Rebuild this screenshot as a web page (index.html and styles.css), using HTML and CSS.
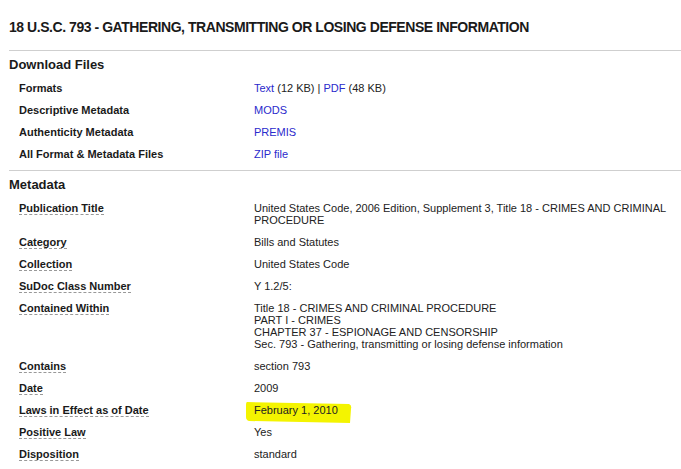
FILE: index.html
```html
<!DOCTYPE html>
<html lang="en">
<head>
    <meta charset="UTF-8">
    <title>18 U.S.C. 793 - Gathering, transmitting or losing defense information</title>
    <link rel="stylesheet" href="styles.css">
</head>
<body>

<div class="page">
    <h1 class="doc-title">18 U.S.C. 793 - GATHERING, TRANSMITTING OR LOSING DEFENSE INFORMATION</h1>

    <div class="section">
        <h2>Download Files</h2>
        <div class="row">
            <div class="label">Formats</div>
            <div class="value"><a href="#">Text</a> (12 KB) | <a href="#">PDF</a> (48 KB)</div>
        </div>
        <div class="row">
            <div class="label">Descriptive Metadata</div>
            <div class="value"><a href="#">MODS</a></div>
        </div>
        <div class="row">
            <div class="label">Authenticity Metadata</div>
            <div class="value"><a href="#">PREMIS</a></div>
        </div>
        <div class="row">
            <div class="label">All Format &amp; Metadata Files</div>
            <div class="value"><a href="#">ZIP file</a></div>
        </div>
    </div>

    <div class="section">
        <h2>Metadata</h2>
        <div class="row">
            <div class="label"><abbr>Publication Title</abbr></div>
            <div class="value">United States Code, 2006 Edition, Supplement 3, Title 18 - CRIMES AND CRIMINAL PROCEDURE</div>
        </div>
        <div class="row">
            <div class="label"><abbr>Category</abbr></div>
            <div class="value">Bills and Statutes</div>
        </div>
        <div class="row">
            <div class="label"><abbr>Collection</abbr></div>
            <div class="value">United States Code</div>
        </div>
        <div class="row">
            <div class="label"><abbr>SuDoc Class Number</abbr></div>
            <div class="value">Y 1.2/5:</div>
        </div>
        <div class="row">
            <div class="label"><abbr>Contained Within</abbr></div>
            <div class="value">
                Title 18 - CRIMES AND CRIMINAL PROCEDURE<br>
                PART I - CRIMES<br>
                CHAPTER 37 - ESPIONAGE AND CENSORSHIP<br>
                Sec. 793 - Gathering, transmitting or losing defense information
            </div>
        </div>
        <div class="row">
            <div class="label"><abbr>Contains</abbr></div>
            <div class="value">section 793</div>
        </div>
        <div class="row">
            <div class="label"><abbr>Date</abbr></div>
            <div class="value">2009</div>
        </div>
        <div class="row">
            <div class="label"><abbr>Laws in Effect as of Date</abbr></div>
            <div class="value">
                <span class="marked">
                    <!-- trait de surligneur jaune -->
                    <svg class="marker" width="108" height="26" viewBox="0 0 108 26">
                        <path d="M2 3 L104 5 Q107 6 106 10 L105 24 L4 22 Q1 21 1 18 L1 6 Q1 3 2 3 Z" fill="#f4f400"/>
                    </svg>
                    February 1, 2010
                </span>
            </div>
        </div>
        <div class="row">
            <div class="label"><abbr>Positive Law</abbr></div>
            <div class="value">Yes</div>
        </div>
        <div class="row">
            <div class="label"><abbr>Disposition</abbr></div>
            <div class="value">standard</div>
        </div>
    </div>
</div>

</body>
</html>
```

FILE: styles.css
```css
body { margin: 0; background-color: #fff; color: #222; font-family: "Liberation Sans", Arial, sans-serif; }
.page { padding: 19px 0 0 9px; }
.doc-title { font-size: 14px; line-height: 16px; font-weight: bold; letter-spacing: -0.45px; margin: 0; padding-bottom: 15px; color: #1a1a1a; }
.section { border-top: 1px solid #cfcfcf; padding-top: 6px; }
.section + .section { margin-top: 5px; }
.section h2 { font-size: 13px; margin: 0 0 10px 0; color: #1a1a1a; }
.row { display: flex; font-size: 11px; line-height: 12px; margin-bottom: 10px; }
.label { width: 235px; padding-left: 10px; font-weight: bold; color: #1a1a1a; flex-shrink: 0; }
.label abbr { text-decoration: none; border-bottom: 1px dashed #999; }
.value { flex: 1; padding-right: 12px; }
.value a { color: #2a2acc; text-decoration: none; }
.marked { position: relative; display: inline-block; }
.marker { position: absolute; left: -9px; top: -5px; z-index: -1; }
```
